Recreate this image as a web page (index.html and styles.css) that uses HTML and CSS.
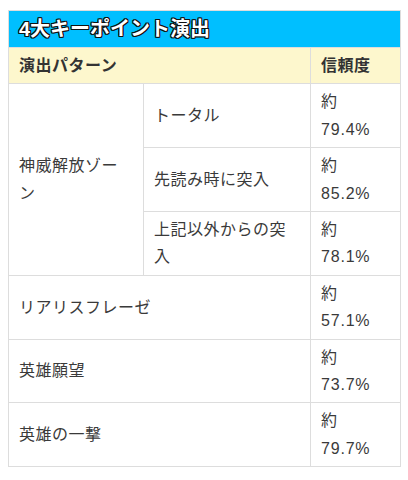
FILE: index.html
```html
<!DOCTYPE html>
<html lang="ja">
<head>
<meta charset="utf-8">
<link rel="stylesheet" href="styles.css">
</head>
<body>
<table class="rate-table">
  <colgroup>
    <col class="c1">
    <col class="c2">
    <col class="c3">
  </colgroup>
  <thead>
    <tr><th class="title" colspan="3">4大キーポイント演出</th></tr>
    <tr class="head"><th colspan="2">演出パターン</th><th>信頼度</th></tr>
  </thead>
  <tbody>
    <tr><td rowspan="3">神威解放ゾーン</td><td>トータル</td><td class="rate"><span class="approx">約</span>79.4%</td></tr>
    <tr><td>先読み時に突入</td><td class="rate"><span class="approx">約</span>85.2%</td></tr>
    <tr><td>上記以外からの突入</td><td class="rate"><span class="approx">約</span>78.1%</td></tr>
    <tr><td colspan="2">リアリスフレーゼ</td><td class="rate"><span class="approx">約</span>57.1%</td></tr>
    <tr><td colspan="2">英雄願望</td><td class="rate"><span class="approx">約</span>73.7%</td></tr>
    <tr><td colspan="2">英雄の一撃</td><td class="rate"><span class="approx">約</span>79.7%</td></tr>
  </tbody>
</table>
</body>
</html>
```
FILE: styles.css
```css
html, body {
  margin: 0;
  padding: 0;
  background: #fff;
}
body {
  padding: 10px 8px;
  font-family: "Liberation Sans", "Noto Sans CJK JP", sans-serif;
  color: #333;
}
.rate-table {
  width: 392px;
  table-layout: fixed;
  border-collapse: collapse;
  border: 1px solid #ddd;
}
.c1 { width: 135px; }
.c2 { width: 167px; }
.c3 { width: 90px; }
.rate-table th,
.rate-table td {
  border: 1px solid #ddd;
  padding: 4px 10px;
  font-size: 16px;
  line-height: 27.4px;
  letter-spacing: 0.5px;
  text-align: left;
  vertical-align: middle;
}
.rate-table td {
  font-weight: 400;
  color: #3a3a3a;
}
.rate-table .rate {
  letter-spacing: 0.8px;
}
.approx {
  display: block;
}
.rate-table .title {
  background: #00bfff;
  color: #fff;
  font-size: 20px;
  line-height: 28px;
  font-weight: 700;
  letter-spacing: 0;
  text-shadow:
    1px 1px 0 #111, -1px -1px 0 #111, 1px -1px 0 #111, -1px 1px 0 #111,
    0 1px 0 #111, 0 -1px 0 #111, 1px 0 0 #111, -1px 0 0 #111;
}
.head th {
  background: #fdf7cd;
  font-weight: 700;
  color: #333;
}
```
